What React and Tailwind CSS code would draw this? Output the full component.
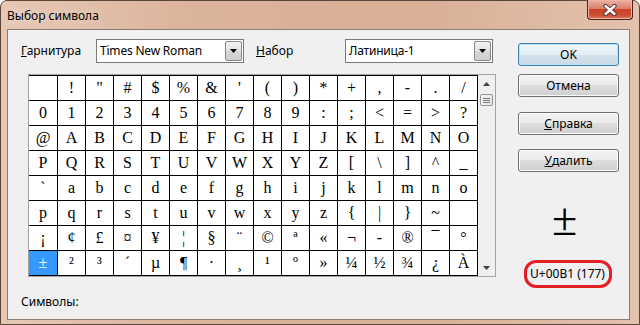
import React from "react";

const rowsA = [];
for (let r = 0; r < 6; r++) {
  const row = [];
  for (let c = 0; c < 16; c++) {
    const code = 0x20 + r * 16 + c;
    row.push(code === 0x20 || code === 0x7f ? "" : String.fromCharCode(code));
  }
  rowsA.push(row);
}
const tail = [];
for (let code = 0xa1; code <= 0xc0; code++) {
  tail.push(code === 0xad ? "-" : String.fromCharCode(code));
}
const rows = [...rowsA, tail.slice(0, 16), tail.slice(16, 32)];

function Arrow({ up }) {
  return (
    <svg width="7" height="4" viewBox="0 0 7 4">
      {up ? <path d="M0 4 L3.5 0 L7 4 Z" fill="#404040" /> : <path d="M0 0 L3.5 4 L7 0 Z" fill="#404040" />}
    </svg>
  );
}

function Select({ text }) {
  return (
    <div className="flex h-[24px] w-[148px] items-center border border-[#7a7a7a] bg-white">
      <span className="pl-[3px] text-[12px] leading-none tracking-[-0.2px] text-black">{text}</span>
      <div className="ml-auto mr-px flex h-[20px] w-[17px] items-center justify-center rounded-[2px] border border-[#8a8a8a] bg-[linear-gradient(#f3f3f3,#e2e2e2_50%,#d6d6d6_50%,#cfcfcf)]">
        <svg width="7" height="4" viewBox="0 0 7 4">
          <path d="M0 0 L3.5 4 L7 0 Z" fill="#000" />
        </svg>
      </div>
    </div>
  );
}

function Btn({ children, def }) {
  return (
    <div
      className={
        def
          ? "flex h-[23px] w-[101px] items-center justify-center rounded-[3px] border border-[#3c7fb1] bg-[linear-gradient(#eef6fb,#e3eef5_50%,#d4e3ec_50%,#c9dae5)] text-[12px] text-black shadow-[inset_0_0_0_1px_#b8e2f8]"
          : "flex h-[23px] w-[101px] items-center justify-center rounded-[3px] border border-[#707070] bg-[linear-gradient(#f2f2f2,#ebebeb_50%,#dddddd_50%,#cfcfcf)] text-[12px] text-black shadow-[inset_0_0_0_1px_#fbfbfb]"
      }
    >
      {children}
    </div>
  );
}

export default function App() {
  return (
    <div className="flex h-[325px] w-[640px] flex-col rounded-t-[7px] border border-[#5a4638] bg-[linear-gradient(90deg,#e6c8b5_0%,#dcb39b_30%,#d9af96_65%,#e3c2ad_100%)] font-['Noto_Sans',sans-serif] text-black">
      {/* title bar */}
      <div className="flex h-[28px] shrink-0 items-start">
        <div className="ml-[6px] mt-[7px] text-[12px] leading-[16px] text-black [text-shadow:0_0_8px_#f3e3d8]">Выбор символа</div>
        <div className="-mt-px ml-auto mr-[6px] flex h-[20px] w-[46px] items-center justify-center rounded-b-[4px] border border-t-0 border-[#4a2418] bg-[linear-gradient(#eab2a4_0%,#dc7e6a_45%,#c9432a_50%,#cf4d33_80%,#dd7a5f_100%)] shadow-[inset_0_0_0_1px_#f0b4a4]">
          <svg width="14" height="12" viewBox="0 0 14 12">
            <path d="M2.5 2 L11.5 10 M11.5 2 L2.5 10" stroke="#4a2a24" strokeWidth="4.2" strokeLinecap="round" />
            <path d="M2.5 2 L11.5 10 M11.5 2 L2.5 10" stroke="#ffffff" strokeWidth="2.4" strokeLinecap="round" />
          </svg>
        </div>
      </div>

      {/* client area */}
      <div className="mb-[4px] ml-[6px] mr-[9px] flex flex-1 border border-[#8d7c70] bg-[#f0f0f0]">
        {/* left column */}
        <div className="flex w-[488px] flex-col pt-[9px]">
          <div className="flex h-[24px] items-center">
            <span className="ml-[13px] w-[75px] text-[12px]">
              <span className="underline">Г</span>арнитура
            </span>
            <Select text="Times New Roman" />
            <span className="ml-[12px] w-[89px] text-[12px]">
              <span className="underline">Н</span>абор
            </span>
            <Select text="Латиница-1" />
          </div>

          <div className="ml-[20px] mt-[11px] flex w-[468px] border border-[#a3a3a3] bg-white">
            <div className="grid grid-cols-[29px_repeat(15,28px)] border-t border-black font-['Liberation_Serif',serif] text-[16px]">
              {rows.map((row, r) =>
                row.map((ch, c) => {
                  const sel = r === 7 && c === 0;
                  return (
                    <div
                      key={r + "-" + c}
                      className={
                        sel
                          ? "flex h-[25px] items-center justify-center border-b border-r border-black bg-[#3399ff] text-white"
                          : "flex h-[25px] items-center justify-center border-b border-r border-black text-black"
                      }
                    >
                      {ch}
                    </div>
                  );
                })
              )}
            </div>
            {/* scrollbar */}
            <div className="flex w-[17px] flex-col bg-[#efefef]">
              <div className="flex h-[17px] items-center justify-center">
                <Arrow up />
              </div>
              <div className="mx-[2px] mt-[2px] flex h-[12px] flex-col items-center justify-center gap-px rounded-[2px] border border-[#959595] bg-[linear-gradient(90deg,#f4f4f4,#e4e4e4)]">
                <div className="h-px w-[7px] bg-[#7a7a7a]" />
                <div className="h-px w-[7px] bg-[#7a7a7a]" />
                <div className="h-px w-[7px] bg-[#7a7a7a]" />
              </div>
              <div className="flex-1" />
              <div className="flex h-[17px] items-center justify-center">
                <Arrow />
              </div>
            </div>
          </div>

          <div className="ml-[13px] mt-[17px] text-[12px] leading-[16px]">Символы:</div>
        </div>

        {/* right column */}
        <div className="ml-[22px] flex w-[101px] flex-col items-center pt-[13px]">
          <Btn def>OK</Btn>
          <div className="mt-[8px]">
            <Btn>Отмена</Btn>
          </div>
          <div className="mt-[15px]">
            <Btn>
              <span className="underline">С</span>правка
            </Btn>
          </div>
          <div className="mt-[14px]">
            <Btn>
              <span className="underline">У</span>далить
            </Btn>
          </div>
          <div className="mr-[8px] mt-[24px] flex h-[48px] items-center justify-center font-['Liberation_Serif',serif] text-[46px] leading-none">
            ±
          </div>
          <div className="mr-[2px] mt-[16px] flex h-[28px] w-[88px] items-center justify-center rounded-[12px] border-[3px] border-[#e51d25] text-[12px] leading-none">
            U+00B1 (177)
          </div>
        </div>
      </div>
    </div>
  );
}
